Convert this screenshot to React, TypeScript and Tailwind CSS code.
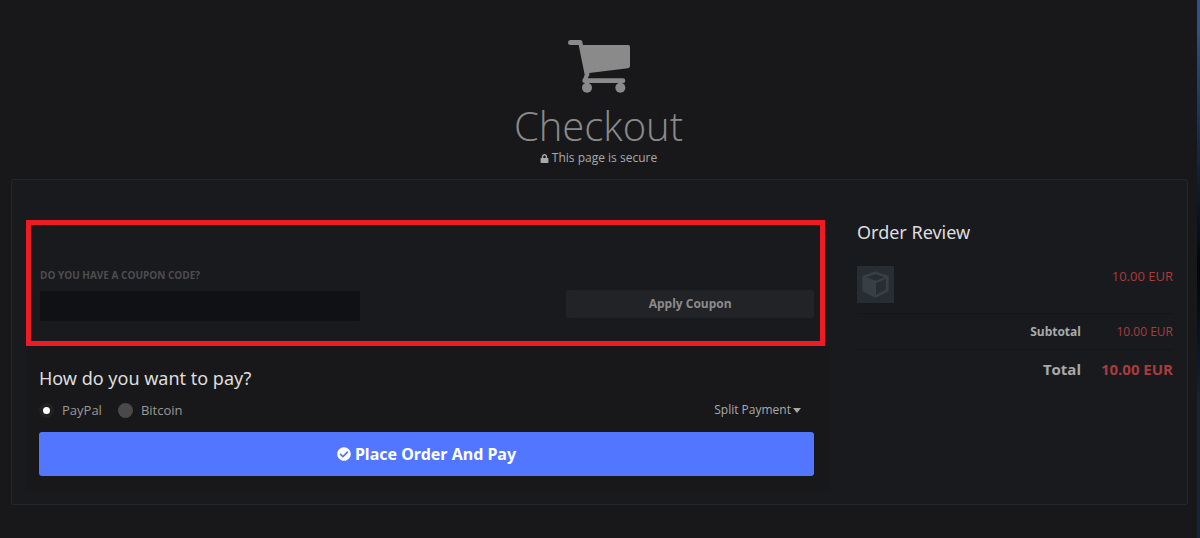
import { FaCheckCircle, FaLock } from "react-icons/fa";

function CartIcon() {
  return (
    <svg className="h-[53px] w-[62px]" viewBox="0 0 186 159" fill="#8a8a8a" aria-hidden="true">
      <path d="M7 0H37Q42 0 43 5L45 15H181Q186 15 186 20V78Q186 84 180 85L64 99V106L59 115H165Q172 115 172 122T165 129H50Q43 129 43 122Q43 117 47 113L50 104L32 15H7Q0 15 0 8T7 0Z" />
      <circle cx="57" cy="143" r="15" />
      <circle cx="157" cy="143" r="15" />
    </svg>
  );
}

function BoxIcon() {
  return (
    <svg className="h-[27px] w-[27px]" viewBox="0 0 81 81" aria-hidden="true">
      <path
        d="M40 5L76 17V58L41 76L5 58V17Z"
        fill="none"
        stroke="#384043"
        strokeWidth="8"
        strokeLinejoin="round"
      />
      <path d="M4 19L42 33V77L4 58Z" fill="#384043" />
      <path d="M4 18L42 33L77 18" fill="none" stroke="#384043" strokeWidth="7" />
    </svg>
  );
}

function PaymentOption({ id, label, checked }: { id: string; label: string; checked?: boolean }) {
  return (
    <div className="flex items-center gap-2">
      <input
        id={id}
        type="radio"
        name="payment"
        defaultChecked={checked}
        className="h-[15px] w-[15px] appearance-none rounded-full bg-[#484948] checked:border-4 checked:border-[#202125] checked:bg-white"
      />
      <label htmlFor={id} className="text-[13px] leading-5 text-[#999]">
        {label}
      </label>
    </div>
  );
}

function CouponForm() {
  return (
    <section className="mr-1 flex items-end justify-between gap-4 border-[5px] border-[#ed1c24] pt-[42px] pr-[6px] pb-5 pl-[9px]">
      <div className="w-80">
        <label htmlFor="coupon" className="mb-2 block text-[10px] leading-4 font-bold text-[#4d4d4e] uppercase">
          Do you have a coupon code?
        </label>
        <input id="coupon" type="text" className="block h-[30px] w-full rounded-xs bg-[#101114] px-2 text-[13px] text-[#999] outline-none" />
      </div>
      <button type="button" className="mb-[3px] h-7 w-[32%] rounded-[3px] bg-[#222326] text-[12px] font-bold text-[#8c8c8c]">
        Apply Coupon
      </button>
    </section>
  );
}

function PaymentForm() {
  return (
    <section className="bg-[#18181a] pt-5 pr-[15px] pb-[15px] pl-[13px]">
      <h2 className="font-['Noto_Sans',sans-serif] text-[18px] leading-6 text-[#dedede]">How do you want to pay?</h2>
      <div className="mt-[10px] mb-3 flex items-center gap-4">
        <PaymentOption id="paypal" label="PayPal" checked />
        <PaymentOption id="bitcoin" label="Bitcoin" />
        <button type="button" className="mr-[13px] ml-auto flex items-center gap-[2px] text-[12px] leading-5 text-[#aaa]">
          Split Payment
          <svg className="h-[5px] w-2" viewBox="0 0 8 5" fill="currentColor" aria-hidden="true">
            <path d="M0 0H8L4 5Z" />
          </svg>
        </button>
      </div>
      <button type="submit" className="flex h-11 w-full items-center justify-center gap-1 rounded-[3px] bg-[#5276ff] font-['Noto_Sans',sans-serif] text-[16px] font-bold text-white">
        <FaCheckCircle className="text-[14px]" />
        Place Order And Pay
      </button>
    </section>
  );
}

function OrderReview() {
  return (
    <aside>
      <h2 className="font-['Noto_Sans',sans-serif] text-[18px] leading-6 text-[#dedede]">Order Review</h2>
      <table className="mt-[13px] w-full text-right text-[#a93c3e]">
        <tbody>
          <tr className="h-14 border-b border-[#151517]">
            <td className="text-left">
              <div className="flex h-[37px] w-[37px] items-center justify-center bg-[#262e34]">
                <BoxIcon />
              </div>
            </td>
            <td colSpan={2} className="pt-[9px] align-top text-[13px] leading-5">10.00 EUR</td>
          </tr>
          <tr className="h-9 border-b border-[#151517]">
            <th scope="row" colSpan={2} className="pt-[2px] text-right text-[12px] text-[#aaa]">Subtotal</th>
            <td className="w-[92px] pt-[2px] text-[12px]">10.00 EUR</td>
          </tr>
          <tr className="h-10 text-[15px] font-bold">
            <th scope="row" colSpan={2} className="text-right text-[#aaa]">Total</th>
            <td>10.00 EUR</td>
          </tr>
        </tbody>
      </table>
    </aside>
  );
}

export default function App() {
  return (
    <div className="flex min-h-screen bg-[#18181a] font-['Open_Sans','Noto_Sans',sans-serif]">
      <main className="min-w-0 flex-1 pt-10 pr-[9px] pb-8 pl-[11px]">
        <header className="flex flex-col items-center pr-[2px]">
          <CartIcon />
          <h1 className="mt-[9px] text-[40px] leading-[48px] font-light text-[#8a8a8a]">Checkout</h1>
          <p className="flex items-center gap-[3px] text-[12px] leading-4 text-[#aaa]">
            <FaLock className="text-[9px]" />
            This page is secure
          </p>
        </header>
        <div className="mt-[13px] grid gap-7 rounded-xs border border-[#23272a] bg-[#191a1e] px-[14px] pt-10 pb-[13px] md:grid-cols-[minmax(0,1fr)_316px]">
          <div>
            <CouponForm />
            <PaymentForm />
          </div>
          <OrderReview />
        </div>
      </main>
      <div className="w-[3px] bg-linear-to-b from-[#2a548c] from-5% via-[#03060a] via-50% to-[#14243a] to-75%" />
    </div>
  );
}
